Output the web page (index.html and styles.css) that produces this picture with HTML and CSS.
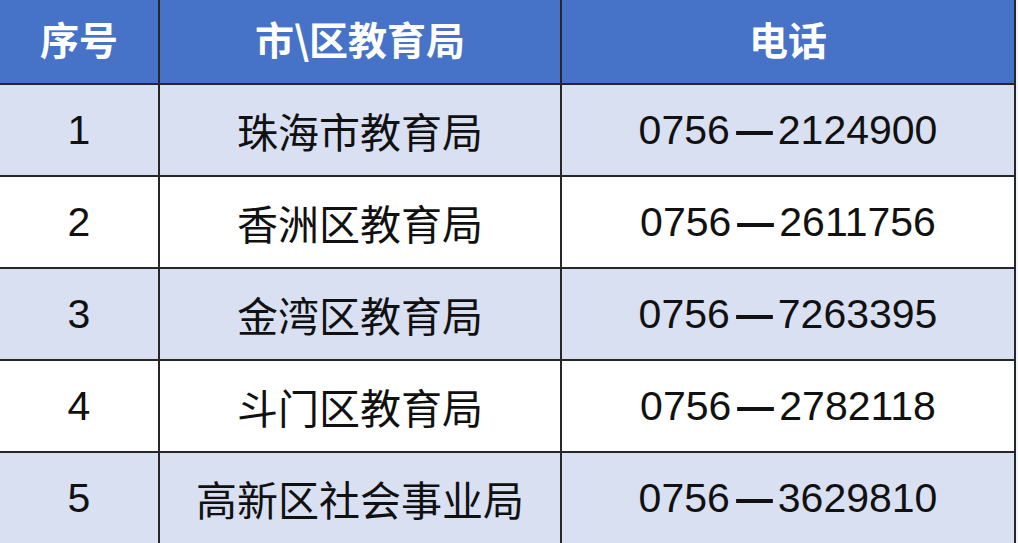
FILE: index.html
```html
<!DOCTYPE html>
<html lang="zh-CN">
<head>
<meta charset="utf-8">
<title>教育局电话</title>
<link rel="stylesheet" href="styles.css">
</head>
<body>
<div class="table">
  <div class="cell head">序号</div>
  <div class="cell head">市\区教育局</div>
  <div class="cell head">电话</div>

  <div class="cell shade num">1</div>
  <div class="cell shade">珠海市教育局</div>
  <div class="cell shade num">0756<span class="dash">—</span>2124900</div>

  <div class="cell num">2</div>
  <div class="cell">香洲区教育局</div>
  <div class="cell num">0756<span class="dash">—</span>2611756</div>

  <div class="cell shade num">3</div>
  <div class="cell shade">金湾区教育局</div>
  <div class="cell shade num">0756<span class="dash">—</span>7263395</div>

  <div class="cell num">4</div>
  <div class="cell">斗门区教育局</div>
  <div class="cell num">0756<span class="dash">—</span>2782118</div>

  <div class="cell shade num">5</div>
  <div class="cell shade">高新区社会事业局</div>
  <div class="cell shade num">0756<span class="dash">—</span>3629810</div>
</div>
</body>
</html>
```
FILE: styles.css
```css
html, body {
  margin: 0;
  padding: 0;
  background: #f3f4f8;
}
body {
  width: 1018px;
  height: 543px;
  overflow: hidden;
}
.table {
  display: grid;
  grid-template-columns: 158px 400px 452px;
  grid-template-rows: 83px repeat(5, 90px);
  gap: 2px;
  padding-right: 2px;
  width: max-content;
  background: #262626;
}
.cell {
  display: flex;
  align-items: center;
  justify-content: center;
  background: #ffffff;
  color: #111111;
  font-family: "Noto Sans CJK SC", "Liberation Sans", sans-serif;
  font-size: 41px;
  line-height: 1;
}
.num {
  font-family: "Liberation Sans", "Noto Sans CJK SC", sans-serif;
}
.dash {
  display: inline-block;
  margin: 0 3px 0 4px;
  font-weight: bold;
  transform: scaleX(0.9);
}
.shade {
  background: #d9e0f1;
}
.head {
  background: #4673c8;
  color: #ffffff;
  font-weight: bold;
  font-size: 39px;
  padding-bottom: 6px;
}
```
